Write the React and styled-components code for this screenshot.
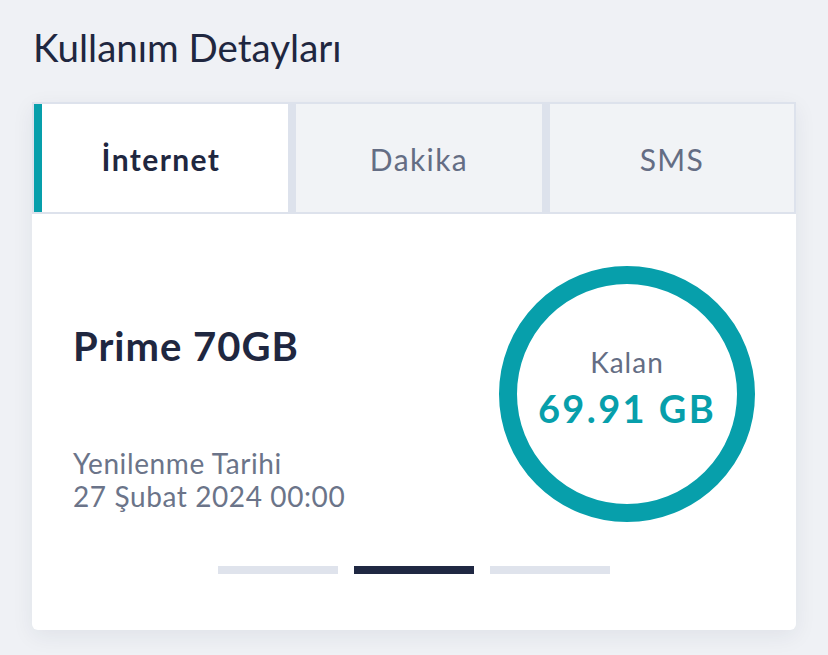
import styled, { createGlobalStyle } from "styled-components";

const GlobalStyle = createGlobalStyle`
  body {
    margin: 0;
    background: #eff1f5;
    font-family: Lato, "Open Sans", sans-serif;
  }
`;

const tabs = ["İnternet", "Dakika", "SMS"];

const App = () => {
  const active = 0;
  const page = 1;

  return (
    <Page>
      <GlobalStyle />
      <Title>Kullanım Detayları</Title>
      <Card>
        <TabBar>
          {tabs.map((t, i) => (
            <Tab key={t} $active={i === active} $grow={[254, 246, 244][i]}>
              {t}
            </Tab>
          ))}
        </TabBar>
        <Body>
          <Row>
            <PackageInfo>
              <PackageName>Prime 70GB</PackageName>
              <Renewal>
                Yenilenme Tarihi
                <br />
                27 Şubat 2024 00:00
              </Renewal>
            </PackageInfo>
            <Gauge>
              <GaugeLabel>Kalan</GaugeLabel>
              <GaugeValue>69.91 GB</GaugeValue>
            </Gauge>
          </Row>
          <Pager>
            {[0, 1, 2].map((i) => (
              <Dot key={i} $on={i === page} />
            ))}
          </Pager>
        </Body>
      </Card>
    </Page>
  );
};
export default App;

const Page = styled.div`
  padding: 22px 32px 25px 32px;
`;

const Title = styled.h1`
  margin: 0 0 30px 1px;
  font-size: 38.5px;
  font-weight: 400;
  line-height: 50px;
  color: #1f2740;
`;

const Card = styled.div`
  width: 764px;
  background: #fff;
  border-radius: 0 0 6px 6px;
  box-shadow: 0 6px 22px rgba(30, 40, 70, 0.07);
  overflow: hidden;
`;

// 탭
const TabBar = styled.div`
  display: flex;
  gap: 8px;
  padding: 2px;
  background: #dde2ec;
`;

const Tab = styled.div`
  flex: ${(p) => p.$grow} 1 0;
  height: 108px;
  padding-top: 2px;
  box-sizing: border-box;
  display: flex;
  align-items: center;
  justify-content: center;
  font-size: 30px;
  letter-spacing: 1.4px;
  font-weight: ${(p) => (p.$active ? 700 : 400)};
  color: ${(p) => (p.$active ? "#1f2740" : "#646d84")};
  background: ${(p) => (p.$active ? "#fff" : "#f1f3f6")};
  box-shadow: ${(p) => (p.$active ? "inset 8px 0 0 #079fab" : "none")};
`;

// 내용
const Body = styled.div`
  padding: 52px 41px 56px 41px;
`;

const Row = styled.div`
  display: flex;
  justify-content: space-between;
  align-items: flex-start;
`;

const PackageInfo = styled.div`
  display: flex;
  flex-direction: column;
  padding-top: 56px;
`;

const PackageName = styled.div`
  font-size: 40px;
  font-weight: 700;
  letter-spacing: 1px;
  color: #1f2740;
  line-height: 48px;
  margin-bottom: 77px;
`;

const Renewal = styled.div`
  font-size: 28px;
  line-height: 33px;
  letter-spacing: 0.6px;
  color: #6b7489;
`;

const Gauge = styled.div`
  width: 256px;
  height: 256px;
  box-sizing: border-box;
  border: 18px solid #079fab;
  border-radius: 50%;
  display: flex;
  flex-direction: column;
  align-items: center;
  justify-content: center;
  padding-bottom: 12px;
`;

const GaugeLabel = styled.div`
  font-size: 28px;
  line-height: 34px;
  letter-spacing: 1px;
  color: #646d84;
  margin-bottom: 6px;
`;

const GaugeValue = styled.div`
  font-size: 38px;
  line-height: 46px;
  letter-spacing: 2.4px;
  font-weight: 700;
  color: #079fab;
`;

// 페이지 표시
const Pager = styled.div`
  display: flex;
  justify-content: center;
  gap: 16px;
  margin-top: 44px;
`;

const Dot = styled.div`
  width: 120px;
  height: 8px;
  background: ${(p) => (p.$on ? "#1f2842" : "#dfe3ec")};
`;
